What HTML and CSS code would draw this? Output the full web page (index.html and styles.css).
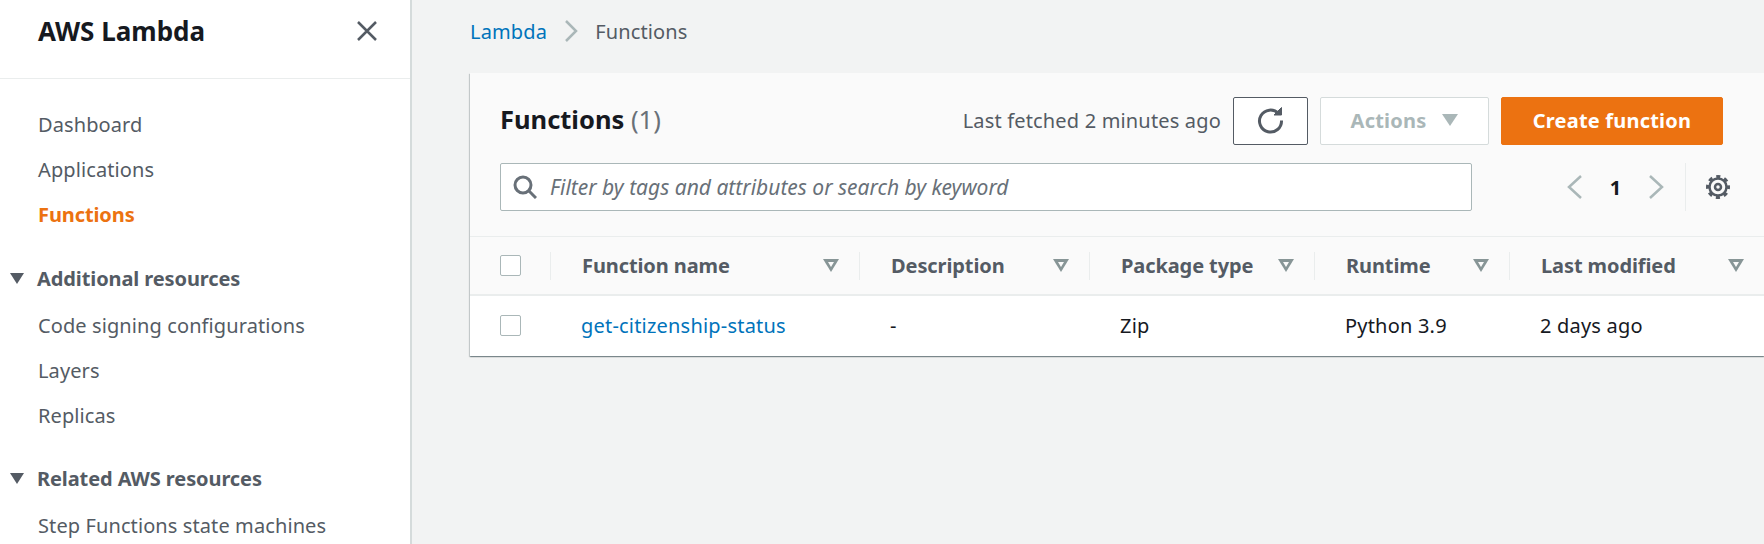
FILE: index.html
```html
<!DOCTYPE html>
<html lang="en">
<head>
  <meta charset="UTF-8">
  <title>Functions - Lambda</title>
  <link rel="stylesheet" href="styles.css">
</head>
<body>
  <div class="page">
    <nav class="sidebar">
      <div class="sidebar-head">
        <span class="sidebar-title">AWS Lambda</span>
        <svg class="close-icon" width="20" height="20" viewBox="0 0 20 20"><path d="M1 1l18 18M19 1L1 19"/></svg>
      </div>
      <div class="nav-group first">
        <a class="nav-item">Dashboard</a>
        <a class="nav-item">Applications</a>
        <a class="nav-item active">Functions</a>
      </div>
      <div class="nav-group">
        <div class="nav-heading"><span class="caret"></span>Additional resources</div>
        <a class="nav-item">Code signing configurations</a>
        <a class="nav-item">Layers</a>
        <a class="nav-item">Replicas</a>
      </div>
      <div class="nav-group">
        <div class="nav-heading"><span class="caret"></span>Related AWS resources</div>
        <a class="nav-item">Step Functions state machines</a>
      </div>
    </nav>

    <main class="content">
      <div class="breadcrumb">
        <a class="link">Lambda</a>
        <svg class="crumb-sep" width="14" height="22" viewBox="0 0 14 22"><path d="M2 1l10 10L2 21"/></svg>
        <span>Functions</span>
      </div>

      <section class="card">
        <div class="card-head">
          <div class="head-row">
            <h2 class="card-title">Functions <span class="count">(1)</span></h2>
            <div class="head-actions">
              <span class="fetched">Last fetched 2 minutes ago</span>
              <button class="btn btn-refresh">
                <svg width="28" height="28" viewBox="0 0 28 28"><path d="M22.500 7.500a11 11 0 1 0 3 7"/><path class="arrow" d="M25.500 1.500v7.500h-7.500z"/></svg>
              </button>
              <button class="btn btn-actions">Actions <span class="caret-light"></span></button>
              <button class="btn btn-primary">Create function</button>
            </div>
          </div>
          <div class="filter-row">
            <div class="filter">
              <svg width="24" height="24" viewBox="0 0 24 24"><circle cx="10" cy="10" r="8"/><path d="M16 16l7 7"/></svg>
              <span>Filter by tags and attributes or search by keyword</span>
            </div>
            <div class="pager">
              <svg width="18" height="26" viewBox="0 0 18 26"><path d="M15 2L3 13l12 11"/></svg>
              <span class="page-num">1</span>
              <svg width="18" height="26" viewBox="0 0 18 26"><path d="M3 2l12 11L3 24"/></svg>
            </div>
            <div class="settings">
              <svg width="26" height="26" viewBox="0 0 26 26"><circle cx="13" cy="13" r="8.500"/><circle class="teeth" cx="13" cy="13" r="10.500"/><circle cx="13" cy="13" r="3"/></svg>
            </div>
          </div>
        </div>

        <div class="table-row table-header">
          <div class="cell cell-check"><span class="checkbox"></span></div>
          <div class="cell">Function name<span class="sort"></span></div>
          <div class="cell">Description<span class="sort"></span></div>
          <div class="cell">Package type<span class="sort"></span></div>
          <div class="cell">Runtime<span class="sort"></span></div>
          <div class="cell">Last modified<span class="sort"></span></div>
        </div>
        <div class="table-row table-body">
          <div class="cell cell-check"><span class="checkbox"></span></div>
          <div class="cell"><a class="link">get-citizenship-status</a></div>
          <div class="cell">-</div>
          <div class="cell">Zip</div>
          <div class="cell">Python 3.9</div>
          <div class="cell">2 days ago</div>
        </div>
      </section>
    </main>
  </div>
</body>
</html>
```

FILE: styles.css
```css
* {
  box-sizing: border-box;
}
html, body {
  height: 100%;
}
body {
  margin: 0;
  overflow: hidden;
  font-family: "Noto Sans", Arial, sans-serif;
  font-size: 20px;
  color: #16191f;
  background: #f2f3f3;
}
.page {
  display: flex;
  height: 544px;
}
.link {
  color: #0073bb;
}

/* sidebar */
.sidebar {
  width: 412px;
  flex: none;
  background: white;
  border-right: 2px solid #d5dbdb;
  overflow: hidden;
  color: #545b64;
}
.sidebar-head {
  height: 79px;
  padding: 0 33px 16px 38px;
  display: flex;
  align-items: center;
  justify-content: space-between;
  border-bottom: 1px solid #eaeded;
}
.sidebar-title {
  font-size: 26px;
  font-weight: 700;
  color: #16191f;
}
.close-icon path {
  fill: none;
  stroke: #545b64;
  stroke-width: 2.500;
}
.nav-group {
  margin-top: 18px;
}
.nav-group.first {
  margin: 23px 0 19px;
}
.nav-item {
  display: block;
  height: 45px;
  line-height: 45px;
  padding-left: 38px;
  letter-spacing: 0.1px;
}
.nav-item.active {
  color: #ec7211;
  font-weight: 700;
  letter-spacing: -0.1px;
}
.nav-heading {
  display: flex;
  align-items: center;
  height: 45px;
  margin-bottom: 2px;
  padding-left: 10px;
  font-weight: 700;
  letter-spacing: -0.1px;
}
.caret {
  width: 0;
  height: 0;
  margin-right: 13px;
  border-left: 7.500px solid transparent;
  border-right: 7.500px solid transparent;
  border-top: 11px solid #545b64;
}

/* main area */
.content {
  flex: 1;
  min-width: 0;
  padding-left: 58px;
}
.breadcrumb {
  height: 73px;
  padding-bottom: 11px;
  display: flex;
  align-items: center;
  gap: 17px;
  color: #545b64;
  letter-spacing: 0.15px;
}
.crumb-sep path {
  fill: none;
  stroke: #aab7b8;
  stroke-width: 2.500;
}
.card {
  background: white;
  box-shadow: 0 1px 1px 0 rgba(0,28,36,0.3), 1px 1px 1px 0 rgba(0,28,36,0.15), -1px 1px 1px 0 rgba(0,28,36,0.15);
}
.card-head {
  height: 164px;
  background: #fafafa;
  border-bottom: 1px solid #eaeded;
  padding: 24px 41px 0 30px;
}
.head-row {
  display: flex;
  align-items: center;
  justify-content: space-between;
  height: 48px;
}
.card-title {
  margin: 0 0 4px;
  font-size: 25.500px;
  font-weight: 700;
}
.count {
  font-weight: 400;
  color: #687078;
}
.head-actions {
  display: flex;
  align-items: center;
}
.fetched {
  color: #545b64;
  margin: 0 12px 2px 0;
  letter-spacing: 0.17px;
}
.btn {
  height: 48px;
  border-radius: 2px;
  font-family: inherit;
  font-size: 20px;
  font-weight: 700;
  padding: 0 0 2px;
  display: flex;
  align-items: center;
  justify-content: center;
}
.btn-refresh {
  width: 75px;
  background: white;
  border: 1px solid #545b64;
  margin-right: 12px;
  padding-right: 2px;
}
.btn-refresh path {
  fill: none;
  stroke: #545b64;
  stroke-width: 3;
}
.btn-refresh .arrow {
  fill: #545b64;
  stroke-width: 1;
}
.btn-actions {
  width: 169px;
  background: white;
  border: 1px solid #d5dbdb;
  color: #aab7b8;
  gap: 16px;
  margin-right: 12px;
  letter-spacing: 0.2px;
}
.caret-light {
  width: 0;
  height: 0;
  border-left: 8px solid transparent;
  border-right: 8px solid transparent;
  border-top: 12px solid #aab7b8;
}
.btn-primary {
  width: 222px;
  background: #ec7211;
  border: 1px solid #ec7211;
  color: white;
  letter-spacing: 0.2px;
}
.filter-row {
  display: flex;
  align-items: center;
  height: 48px;
  margin-top: 18px;
}
.filter {
  flex: none;
  width: 972px;
  height: 48px;
  background: white;
  border: 1px solid #aab7b8;
  border-radius: 2px;
  display: flex;
  align-items: center;
  gap: 13px;
  padding-left: 12px;
  color: #687078;
  font-size: 21px;
  font-style: italic;
}
.filter svg circle, .filter svg path {
  fill: none;
  stroke: #687078;
  stroke-width: 3;
}
.pager {
  flex: none;
  margin-left: 94px;
  width: 99px;
  display: flex;
  align-items: center;
  justify-content: space-between;
}
.pager path {
  fill: none;
  stroke: #aab7b8;
  stroke-width: 2.500;
}
.page-num {
  font-weight: 700;
}
.settings {
  flex: none;
  margin-left: 20px;
  height: 48px;
  border-left: 1px solid #eaeded;
  padding-left: 19px;
  display: flex;
  align-items: center;
}
.settings circle {
  fill: none;
  stroke: #545b64;
  stroke-width: 2.500;
}
.settings .teeth {
  stroke-width: 3;
  stroke-dasharray: 4.120 4.120;
  stroke-dashoffset: 2.060;
}

/* table */
.table-row {
  display: grid;
  grid-template-columns: 80px 309px 230px 225px 195px 1fr;
  align-items: center;
}
.table-header {
  height: 59px;
  background: #fafafa;
  border-bottom: 2px solid #eaeded;
  font-weight: 700;
  color: #545b64;
  letter-spacing: -0.1px;
}
.table-body {
  height: 60px;
  padding-bottom: 2px;
  letter-spacing: 0.2px;
}
.cell {
  display: flex;
  align-items: center;
  justify-content: space-between;
  padding: 0 20px 0 31px;
}
.table-header .cell {
  height: 28px;
  border-left: 1px solid #eaeded;
}
.table-header .cell-check, .table-body .cell-check {
  border-left: none;
  padding: 0 0 0 30px;
}
.checkbox {
  display: block;
  width: 21px;
  height: 21px;
  background: white;
  border: 1px solid #aab7b8;
  border-radius: 2px;
}
.sort {
  position: relative;
  width: 0;
  height: 0;
  border-left: 8px solid transparent;
  border-right: 8px solid transparent;
  border-top: 13px solid #879596;
}
.sort::after {
  content: "";
  position: absolute;
  left: -3px;
  top: -10px;
  width: 0;
  height: 0;
  border-left: 3px solid transparent;
  border-right: 3px solid transparent;
  border-top: 5px solid #fafafa;
}
```
